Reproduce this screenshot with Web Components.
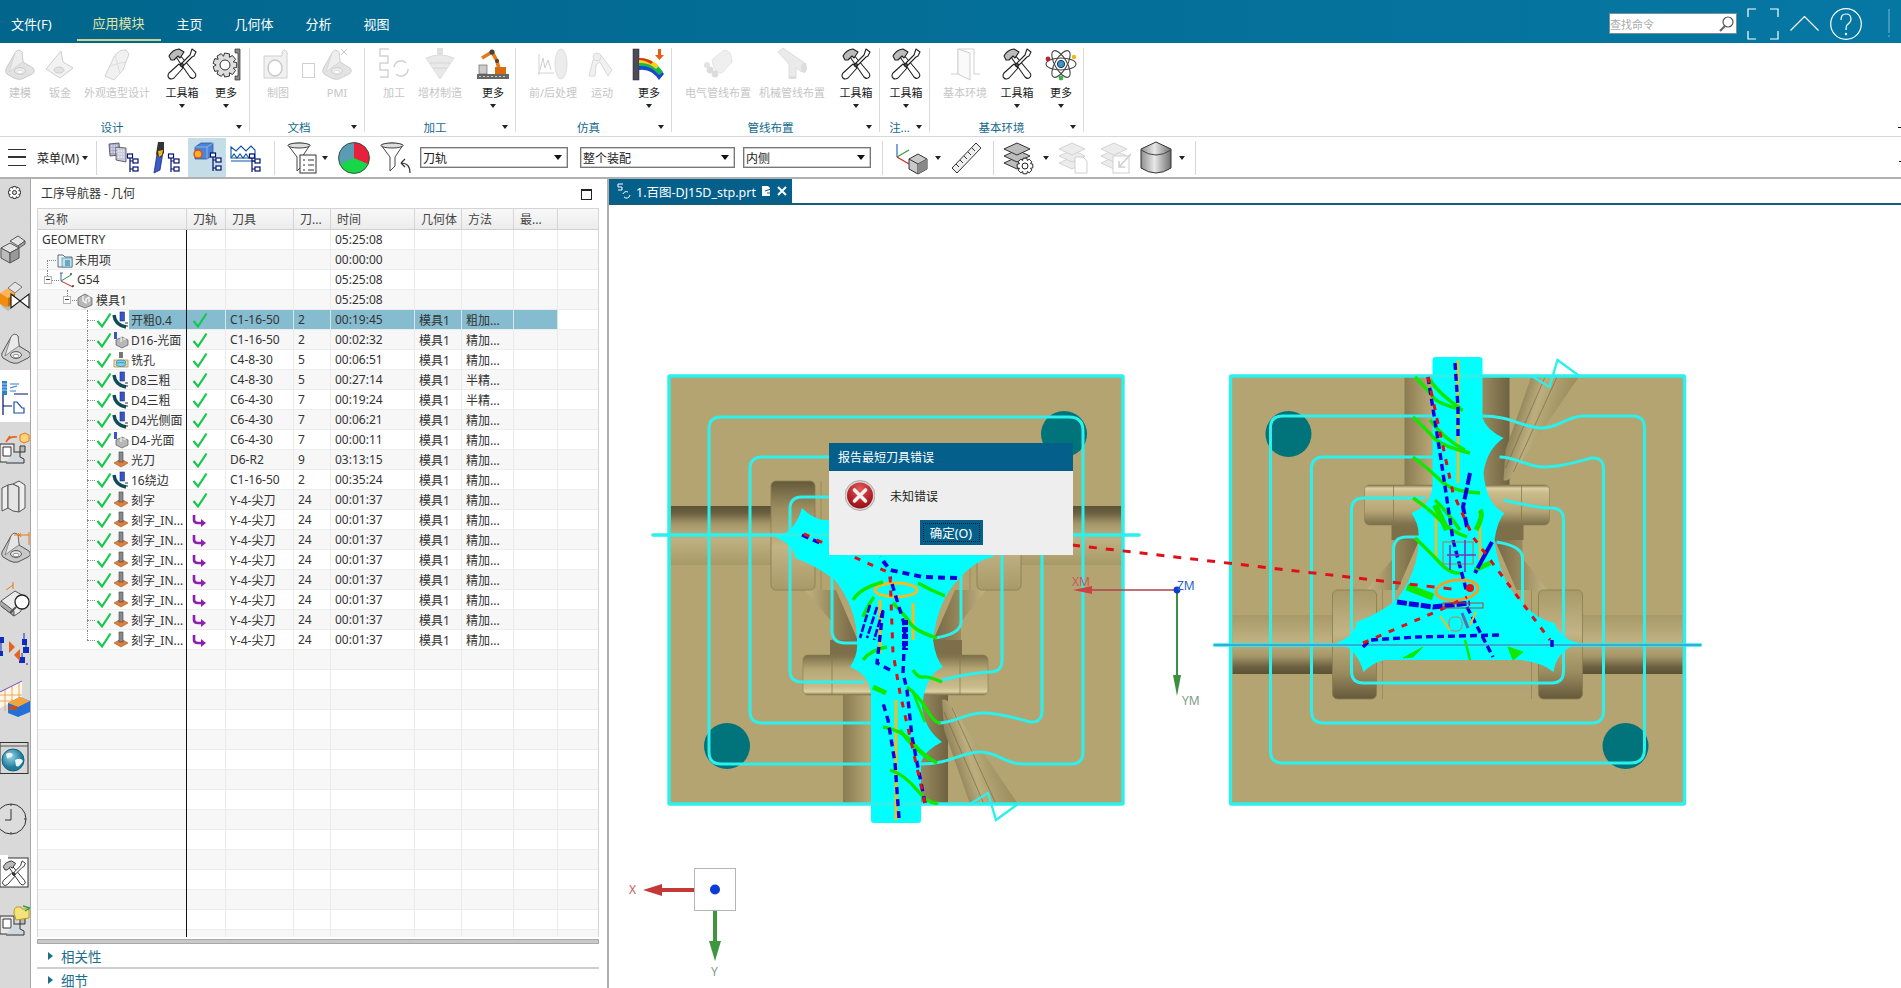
<!DOCTYPE html>
<html lang="zh">
<head>
<meta charset="utf-8">
<title>NX</title>
<style>
  html, body { margin: 0; padding: 0; width: 1901px; height: 988px; overflow: hidden; background: #fff; }
  body { font-family: "Noto Sans", "Noto Sans CJK SC", sans-serif; }
</style>
</head>
<body>
<nx-app>
  <nx-titlebar slot="title"></nx-titlebar>
  <nx-ribbon slot="ribbon"></nx-ribbon>
  <nx-toolbar slot="toolbar"></nx-toolbar>
  <nx-rail slot="rail"></nx-rail>
  <nx-navigator slot="nav"></nx-navigator>
  <nx-viewport slot="view">
    <nx-dialog heading="报告最短刀具错误" message="未知错误" action="确定(O)"></nx-dialog>
  </nx-viewport>
</nx-app>

<script>
const FONT = '"Noto Sans", "Noto Sans CJK SC", sans-serif';

function gear(cx, cy, r, n = 8) {
  let d = '';
  const step = Math.PI * 2 / n;
  for (let i = 0; i < n; i += 1) {
    const a = i * step;
    const pts = [[r * 0.74, -0.5], [r, -0.3], [r, 0.3], [r * 0.74, 0.5]];
    pts.forEach(([rad, o], k) => {
      const x = cx + rad * Math.cos(a + o * step);
      const y = cy + rad * Math.sin(a + o * step);
      d += `${i === 0 && k === 0 ? 'M' : 'L'}${x.toFixed(1)} ${y.toFixed(1)} `;
    });
  }
  return d + 'Z';
}

const tree = `<g fill="#fff" stroke="#00106e" stroke-width="1.2"><path d="M22 13v17M22 19h3M22 27h3" fill="none"/><rect x="19.5" y="12" width="5" height="4"/><rect x="25" y="17" width="5" height="4"/><rect x="25" y="25" width="5" height="4"/></g>`;
const bracket = (a, b, c) => `<path d="M2 21 L11 5 Q14 0 18 4 L19 14 L29 20 Q32 24 28 26 L18 31 Q14 32 10 30 L3 26 Q1 24 2 21Z" fill="${a}" stroke="${b}"/><path d="M11 5 Q14 0 18 4 L19 14 L13 18 L5 24 Z" fill="${c}" stroke="${b}" stroke-width=".6"/><ellipse cx="16" cy="23" rx="5.5" ry="3.4" fill="${c}" stroke="${b}"/><ellipse cx="16" cy="24" rx="3" ry="1.7" fill="#fff" stroke="${b}" stroke-width=".6"/>`;
const tools = `<g fill="#fff" stroke="#222" stroke-width="1.1" stroke-linejoin="round"><path d="M10 9 L13 6 L29 25 Q31 28 28 30 Q26 31 24 29 Z"/><path d="M3 8 Q6 2 13 1 L18 4 L14 10 L12 8 L8 12 L5 12 Z" fill="#bbb"/><path d="M26 1 L30 4 L28 8 L26 9 L15 20 L13 18 L24 7 Z"/><path d="M13 16 L17 20 L8 30 Q5 32 3 30 Q1 28 3 25 Z"/><circle cx="16" cy="17" r="1.5" fill="#555"/></g>`;
const layers = (s, f) => [21, 14, 7].map(y => `<path d="M14 ${y - 6} L27 ${y} L14 ${y + 6} L1 ${y} Z" fill="${f}" stroke="${s}" stroke-width="1"/>`).join('');
const funnel = `<path d="M1 3 Q12 -1 23 3 L15 15 L15 24 L10 29 L10 15 Z" fill="#fff" stroke="#444"/><ellipse cx="12" cy="3.5" rx="11" ry="2.5" fill="#ddd" stroke="#444"/>`;
const machine = `<g stroke="#333" fill="#e8e8e8" stroke-width="1"><rect x="0" y="12" width="14" height="18"/><path d="M3 15h8v9H3z" fill="#fff"/><path d="M14 20 h6 v5 l4 2 v4 h-18" fill="#cfd8dc"/><path d="M20 14 h5 v6 h-5z" fill="#bbb"/></g>`;
const mill = `<path d="M1 3 Q2 13 13 15" fill="none" stroke="#0d4d57" stroke-width="3.4"/><rect x="7" y="0" width="4.4" height="9" fill="#3a55c8" stroke="#1a2e80" stroke-width=".6"/><path d="M12 11h3M12 14h3" stroke="#333"/>`;
const engrave = `<path d="M1 11 L8 7 L15 11 L8 15 Z" fill="#e07f3a" stroke="#a3521a" stroke-width=".6"/><rect x="6" y="0" width="4" height="10" fill="#8a8a8a" stroke="#444" stroke-width=".6"/>`;
const face = `<path d="M3 8 L9 5 L15 8 L15 13 L9 16 L3 13 Z" fill="#b8b8b8" stroke="#555" stroke-width=".7"/><path d="M8 5 v5 M10 7 h3" stroke="#fff"/><rect x="1" y="0" width="3" height="7" fill="#3a55c8"/>`;
const drill = `<rect x="1" y="8" width="14" height="7" fill="#f3e3c0" stroke="#a67c3c" stroke-width=".7"/><ellipse cx="8" cy="10" rx="5" ry="2" fill="#7fd3e6" stroke="#2d7d94" stroke-width=".7"/><ellipse cx="8" cy="12.5" rx="5" ry="2" fill="#7fd3e6" stroke="#2d7d94" stroke-width=".7"/><rect x="6" y="0" width="4" height="6" fill="#777"/>`;

const ICONS = {
  model: bracket('#e2e2e2', '#c9c9c9', '#ededed'),
  sheet: `<path d="M2 21 L17 3 L19 14 L29 20 L16 30 Z" fill="#f2f2f2" stroke="#cfcfcf"/><ellipse cx="15" cy="22" rx="5" ry="3" fill="#e2e2e2" stroke="#cfcfcf"/>`,
  surface: `<path d="M4 28 L13 9 Q18 1 25 2 L28 6 L22 22 L13 32 Z" fill="#f1f1f1" stroke="#d2d2d2"/><path d="M9 18 Q18 15 25 14 M14 6 L19 26" stroke="#ddd" fill="none"/>`,
  tools,
  gearbar: `<path d="${gear(15, 17, 12, 9)}" fill="#ddd" stroke="#333"/><circle cx="15" cy="17" r="5" fill="#fff" stroke="#333"/><path d="M25 1 H30 V32 H25 V28 H28 V5 H25Z" fill="#888" stroke="#333" stroke-width=".7"/>`,
  drawing: `<path d="M2 8 H20 V4 Q22 0 25 4 V30 H2 Z" fill="#f1f1f1" stroke="#d0d0d0"/><ellipse cx="13" cy="20" rx="7" ry="8" fill="#fff" stroke="#c6c6c6" stroke-width="1.4"/>`,
  pmi: bracket('#e3e3e3', '#cfcfcf', '#eeeeee') + `<path d="M20 1 l6 6 M26 1 l-6 6" stroke="#c8c8c8"/>`,
  cam: `<path d="M11 1 H2 V8 H10 V15 H2 V22 H10 V29 H2" fill="none" stroke="#d2d2d2" stroke-width="1.4"/><path d="M16 19 A7 7 0 0 1 28 15 M30 21 A7 7 0 0 1 18 26" fill="none" stroke="#d2d2d2" stroke-width="1.6"/>`,
  additive: `<path d="M2 10 L16 31 L30 10 Q16 4 2 10 Z" fill="#e9e9e9" stroke="#ddd"/><rect x="13" y="0" width="6" height="7" fill="#e0e0e0"/><path d="M6 15 H26 M9 20 H23" stroke="#d4d4d4"/>`,
  robot: `<rect x="0" y="26" width="32" height="5" fill="#666"/><path d="M2 28.5h28" stroke="#ccc" stroke-dasharray="2 2"/><rect x="2" y="17" width="8" height="9" fill="#ccc" stroke="#555" stroke-width=".6"/><path d="M23 25 L20 13 L15 4 L5 10" fill="none" stroke="#e67a14" stroke-width="3.6"/><rect x="18" y="19" width="11" height="7" fill="#d86a10"/><circle cx="15" cy="4" r="2.6" fill="#444"/><circle cx="20" cy="13" r="2" fill="#444"/>`,
  post: `<path d="M1 25 H17 M2 6 V27" stroke="#d2d2d2" fill="none"/><path d="M3 22 L6 10 L8 20 L11 12 L14 22" stroke="#cfcfcf" fill="none"/><ellipse cx="24" cy="16" rx="6" ry="15" fill="#ececec" stroke="#ddd"/>`,
  motion: `<path d="M3 28 L7 12 L14 6 L26 22 L22 28 L14 14 L10 17 L9 28Z" fill="#f1f1f1" stroke="#d8d8d8"/><circle cx="11" cy="9" r="4" fill="#eee" stroke="#ddd"/>`,
  sim: `<rect x="0" y="1" width="6" height="31" fill="#4e4a5c" stroke="#222" stroke-width=".5"/><path d="M6 10 Q20 10 31 26 L26 32 Q18 20 6 22 Z" fill="#1c46d0"/><path d="M6 10 Q20 10 30 24 L26 27 Q18 17 6 18 Z" fill="#17b94a"/><path d="M6 10 Q18 10 26 18 L23 21 Q16 14 6 15 Z" fill="#f3d518"/><path d="M6 10 Q14 10 20 14 L18 16 Q12 12 6 12 Z" fill="#e5301e"/><path d="M25 1v6h-3l4.5 5 4.5-5h-3V1z" fill="#ee5a10"/>`,
  elec: `<path d="M10 12 L22 2 Q30 2 30 14 L20 25 Q12 26 10 12Z" fill="#efefef" stroke="#e4e4e4"/><circle cx="8" cy="22" r="3.4" fill="#dcdcdc"/><circle cx="13" cy="26" r="3.4" fill="#dcdcdc"/><circle cx="5" cy="17" r="3" fill="#e2e2e2"/>`,
  mech: `<path d="M2 4 L7 0 L30 16 L26 24 L20 20 L20 30 H13 L13 16 Z" fill="#eaeaea" stroke="#ddd"/><ellipse cx="28" cy="20" rx="3" ry="5" fill="#ddd"/><rect x="13" y="28" width="7" height="3" fill="#ddd"/>`,
  door: `<path d="M2 26 H9 M25 26 H31" stroke="#d0d0d0"/><path d="M9 1 H25 V26 M9 1 V26" fill="none" stroke="#d0d0d0"/><path d="M9 1 L21 5 V32 L9 26 Z" fill="#fafafa" stroke="#cfcfcf"/>`,
  atom: `<g fill="none" stroke="#444" stroke-width="1.1"><ellipse cx="16" cy="16" rx="15" ry="6"/><ellipse cx="16" cy="16" rx="15" ry="6" transform="rotate(60 16 16)"/><ellipse cx="16" cy="16" rx="15" ry="6" transform="rotate(120 16 16)"/></g><circle cx="16" cy="16" r="3.6" fill="#3a97c8" stroke="#135"/><circle cx="3" cy="11" r="2.4" fill="#c22030"/><circle cx="29" cy="9" r="2.2" fill="#eeb818"/><circle cx="16" cy="30" r="2.4" fill="#35b44a"/>`,
  nav1: `<g stroke="#445" stroke-width=".8"><path d="M1 2 L11 1 L12 13 L2 14 Z" fill="#a9adc8"/><path d="M8 5 L18 6 L18 20 L8 18 Z" fill="#c8cad8"/></g><path d="M3 4h7M3 7h7M3 10h7M10 9h6M10 12h6M10 15h6" stroke="#fff" stroke-dasharray="1.5 1"/>` + tree,
  nav2: `<path d="M8 12 L5 31 L11 28 L14 10 Z" fill="#3b5cc4" stroke="#1a2a7a" stroke-width=".8"/><path d="M9 0 H15 V11 L11 16 L7 12 Z" fill="#333"/><path d="M9 9 L14 8 L13 13 L10 15Z" fill="#f3b820"/>` + tree,
  nav3: `<path d="M4 6 L10 2 L22 2 L22 14 L16 18 L4 18 Z" fill="#4d84d8" stroke="#1f4a98" stroke-width=".7"/><path d="M4 6 H16 V18 M16 6 L22 2" fill="none" stroke="#a8c8f0" stroke-width=".7"/><circle cx="7" cy="13" r="4" fill="#f5b024" stroke="#d8462a" stroke-width="1.3"/>` + tree,
  nav4: `<path d="M1 5 L6 9 L11 4 L16 9 L21 4 L25 8 V16 H1 Z" fill="#fff" stroke="#0b55a3" stroke-width="1.1"/><path d="M1 16 L4 12 L7 16 L10 12 L13 16 L16 12 L19 16 L22 12 L25 16" fill="none" stroke="#0b55a3" stroke-width="1.1"/><path d="M1 19h24" stroke="#0b55a3"/>` + tree,
  filterlist: funnel + `<rect x="13" y="13" width="16" height="18" fill="#fff" stroke="#333"/><path d="M16 18h2M21 18h6M16 23h2M21 23h6M16 28h2M21 28h6" stroke="#333"/>`,
  pie: `<circle cx="16" cy="16" r="15.5" fill="#17d648"/><path d="M16 16 L16 .5 A15.5 15.5 0 0 1 30 22 Z" fill="#e9203c"/><path d="M16 16 L16 .5 A15.5 15.5 0 0 0 2 22 Z" fill="#5a9cb4"/><circle cx="16" cy="16" r="15.5" fill="none" stroke="#333" stroke-width=".8"/>`,
  filterundo: funnel + `<path d="M30 31 Q30 21 21 21 M21 21 l4 -4 M21 21 l4 4" fill="none" stroke="#333" stroke-width="1.2"/>`,
  csyscube: `<path d="M14 17 L23 12 L32 17 L32 27 L23 32 L14 27 Z" fill="#c9c9c9" stroke="#333"/><path d="M14 17 L23 22 L32 17 M23 22 V32" fill="none" stroke="#333"/><path d="M23 22 L32 17 V27 L23 32Z" fill="#888"/><path d="M2 15 V2" stroke="#2a6db0" stroke-width="1.2"/><path d="M2 15 L14 8" stroke="#2aa040" stroke-width="1.2"/><path d="M2 15 L14 22" stroke="#d02020" stroke-width="1.2"/>`,
  ruler: `<path d="M2 26 L26 1 L31 6 L7 31 Z" fill="#eee" stroke="#333"/><path d="M6 22l3 3M10 18l3 3M14 14l3 3M18 10l3 3M22 6l3 3" stroke="#333"/>`,
  layergear: layers('#333', '#bdbdbd') + `<path d="${gear(22, 24, 8, 8)}" fill="#fff" stroke="#222"/><circle cx="22" cy="24" r="3" fill="#fff" stroke="#222"/>`,
  layercopy: layers('#d4d4d4', '#ececec') + `<path d="M17 15 H25 L29 19 V31 H17 Z" fill="#fff" stroke="#cfcfcf"/>`,
  layermove: layers('#d4d4d4', '#ececec') + `<rect x="13" y="14" width="16" height="17" fill="#fff" stroke="#cfcfcf"/><path d="M31 12 L19 25 M19 19 V25 H25" fill="none" stroke="#cfcfcf" stroke-width="1.6"/>`,
  cylinder: `<defs><linearGradient id="g"><stop offset="0" stop-color="#8f8f8f"/><stop offset=".45" stop-color="#e8e8e8"/><stop offset="1" stop-color="#6f6f6f"/></linearGradient></defs><path d="M1 7 L16 0 L31 7 V26 Q16 36 1 26 Z" fill="url(#g)" stroke="#333"/><path d="M1 8 Q16 18 31 8" fill="none" stroke="#444"/>`,
  railcube: `<g stroke="#555" fill="#e4e4e4"><path d="M1 19 L10 14 L19 19 L10 24Z"/><path d="M1 19 V29 L10 34 V24 Z" fill="#bbb"/><path d="M19 19 V29 L10 34 V24Z" fill="#999"/><path d="M10 12 L18 7 L25 12 L18 17Z"/><path d="M19 19 L25 15 V12 L18 17 Z" fill="#aaa"/></g>`,
  railvalve: `<path d="M0 13 L8 8 L15 13 L8 18 Z" fill="#ffb45a"/><path d="M0 13 V24 L8 29 V18 Z" fill="#f08c10"/><path d="M15 13 V24 L8 29 V18 Z" fill="#c96f08"/><path d="M8 8 L15 2 L22 7 L15 13 Z" fill="#e4e4e4" stroke="#777"/><path d="M1 26 L8 31 L15 26 V22 L8 27 Z" fill="#bbb"/><path d="M11 14 L29 28 V14 L11 28 Z" fill="#fff" stroke="#111" stroke-width="1.1"/>`,
  railbracket: bracket('#cfcfcf', '#555', '#eaeaea'),
  railop: `<rect x="2" y="0" width="5" height="14" fill="#2f7fd0"/><path d="M2 3h5M2 6h5M2 9h5" stroke="#a8d0f0"/><path d="M10 3 H19 M10 7 L17 5 M10 10 H16" stroke="#2f7fd0" stroke-width="1.2"/><path d="M3 14 V34 M3 25 H12 M14 13 H28" stroke="#00106e" stroke-width="1.2" fill="none"/><path d="M14 21 H17 L22 27 H24 V32 H14 Z" fill="#fff" stroke="#1f4fa8" stroke-width="1.2"/>`,
  railmachine: machine + `<path d="M6 10 Q9 4 17 5 M10 4l-4 6" stroke="#e6641a" stroke-width="1.6" fill="none"/><path d="M20 3 L25 1 L29 3 V9 L24 11 L20 9Z" fill="#ffd37a" stroke="#e67a14"/>`,
  railbooks: `<g fill="#eee" stroke="#555"><path d="M2 8 L8 5 V28 L2 31 Z"/><path d="M8 5 L13 4 L19 7 V32 L13 31 L8 28 Z" fill="#e4e4e4"/><path d="M13 4 L19 1 L25 5 V28 L19 32 V7 Z"/></g>`,
  raildim: bracket('#c8c8c8', '#555', '#e6e6e6') + `<path d="M14 4 H29 M29 1 V14 M18 2 l3 4 M21 2 l-3 4" stroke="#e67a14" fill="none"/>`,
  railsection: `<path d="M1 19 L15 9 L29 17 L20 30 L14 34 L1 24 Z" fill="#ececec" stroke="#555"/><path d="M1 24 L14 34 V29 L1 19" fill="#aaa" stroke="#555"/><circle cx="22" cy="20" r="7" fill="#fff" stroke="#222" stroke-width="1.3"/><path d="M16 25 L10 31" stroke="#555" stroke-width="2"/><path d="M13 0 V7 M6 8 L13 3" stroke="#e67a14"/>`,
  railflow: `<g fill="#0c2dbd"><rect x="-2" y="6" width="6" height="6"/><rect x="22" y="8" width="5" height="6"/><rect x="-2" y="20" width="5" height="5"/><rect x="23" y="16" width="6" height="6"/><rect x="19" y="26" width="6" height="6"/></g><path d="M1 12v8M24 2v6M26 14v2M22 22v4M27 32v2" stroke="#0c2dbd" fill="none"/><path d="M9 10 L15 16 L9 22 Z" fill="#e6641a"/><path d="M20 18 L14 24 L20 30Z" fill="#e6641a"/>`,
  railgrid: `<path d="M-2 12 L22 0 V16 L-2 28 Z" fill="#fff7e6"/><path d="M-2 14 H22 M-2 20 H22 M5 8 V30 M12 5 V30 M19 2 V20" stroke="#e8a860"/><path d="M-2 12 L22 0" stroke="#7050c0"/><path d="M8 22 L20 16 L30 20 L30 31 L18 36 L8 32 Z" fill="#2470d8"/><path d="M8 22 L20 16 L30 20 L18 26 Z" fill="#f5a43a"/><rect x="9" y="25" width="8" height="4" fill="#c05020"/>`,
  railglobe: `<defs><radialGradient id="g" cx=".4" cy=".35"><stop offset="0" stop-color="#98d6e8"/><stop offset="1" stop-color="#1f7a9c"/></radialGradient></defs><rect x="0" y=".5" width="28" height="31" fill="#d8d8d8" stroke="#333"/><path d="M0 4 H28" stroke="#555"/><circle cx="13" cy="18" r="11" fill="url(#g)" stroke="#17607c"/><path d="M6 12 Q11 9 13 13 Q10 17 7 16Z M15 18 Q21 15 23 19 Q19 26 16 24Z" fill="#eaf6fa"/>`,
  railclock: `<circle cx="11" cy="16" r="15" fill="#dcdcdc" stroke="#333"/><path d="M11 6 V17 H5 M11 1v2M11 29v2M-4 16h2M24 16h2" stroke="#333" fill="none"/>`,
  railtools: `<rect x="0" y="2" width="28" height="29" fill="#fff" stroke="#333"/><rect x="-2" y="-1" width="10" height="4" fill="#fff"/><g transform="scale(.82) translate(1 5)">${tools}</g>`,
  railmachine2: machine + `<path d="M14 9 Q14 3 17 3 H21 L22 5 H29 V14 L16 16 Z" fill="#f4e27a" stroke="#b89c20"/><path d="M23 2 L30 4 L25 7" fill="none" stroke="#2aa040" stroke-width="1.4"/>`,
  ok: `<path d="M1.5 9 L6 14.5 L14.5 1.5" fill="none" stroke="#14c84a" stroke-width="2.2"/>`,
  post2: `<path d="M2 3 L2 8 Q2 11 6 11 L10 11" fill="none" stroke="#8a1fb0" stroke-width="2.6"/><path d="M9 7 L14 11 L9 15 Z" fill="#8a1fb0"/>`,
  mill, engrave, face, drill,
  folder: `<path d="M1 3 H6 L8 5 H15 V15 H1 Z" fill="#eaf3f7" stroke="#446" stroke-width=".8"/><rect x="5" y="6" width="10" height="9" fill="#bfe0ec" stroke="#2d7d94" stroke-width=".6"/><path d="M8 9h5M8 11h5M8 13h5" stroke="#1d6d8c"/>`,
  csys: `<path d="M2 9 L14 15" stroke="#d02020"/><path d="M2 9 L12 3" stroke="#2aa040"/><path d="M2 9 V1" stroke="#2a6db0"/><path d="M1 1h3M11 1l2 2m0-2l-2 2M13 13l2 2m0-2l-2 2" stroke="#333" stroke-width=".7"/>`,
  workpiece: `<path d="M1 6 L8 2 L15 6 V13 L8 16 L1 13 Z" fill="#b8b8b8" stroke="#555" stroke-width=".7"/><path d="M6 4 v5 l3 2 v-4 l3-2 v5" fill="none" stroke="#fff" stroke-width="1.2"/>`
};

class NxIcon extends HTMLElement {
  connectedCallback() {
    const size = +this.getAttribute('size') || 32;
    const box = +this.getAttribute('box') || 32;
    this.attachShadow({ mode: 'open' });
    this.shadowRoot.innerHTML = `
      <style>:host { display: block; width: ${size}px; height: ${size}px; flex: none; } svg { display: block; overflow: visible; }</style>
      <svg width="${size}" height="${size}" viewBox="0 0 ${box} ${box}">${ICONS[this.getAttribute('name')] || ''}</svg>`;
  }
}

class NxApp extends HTMLElement {
  constructor() {
    super();
    this.attachShadow({ mode: 'open' });
  }

  connectedCallback() {
    this.shadowRoot.innerHTML = `
    <style>
      :host { display: flex; flex-direction: column; width: 1901px; height: 988px; font-family: ${FONT}; overflow: hidden; }
      .main { display: flex; flex: 1; min-height: 0; }
    </style>
    <slot name="title"></slot>
    <slot name="ribbon"></slot>
    <slot name="toolbar"></slot>
    <div class="main">
      <slot name="rail"></slot>
      <slot name="nav"></slot>
      <slot name="view"></slot>
    </div>`;
  }
}

class NxTitlebar extends HTMLElement {
  connectedCallback() {
    this.attachShadow({ mode: 'open' });
    this.shadowRoot.innerHTML = `
    <style>
      :host { display: flex; align-items: center; height: 43px; color: #fff; font-size: 13px;
        background: linear-gradient(90deg, #02668c, #0677a3); flex: none; }
      .tabs { display: flex; height: 43px; align-items: stretch; }
      .tab { display: flex; align-items: center; padding-top: 3px; box-sizing: border-box; }
      .active { color: #e3e3a4; border-bottom: 2px solid #c9d58f; width: 84px; justify-content: center; margin: 0 16px 0 25px; height: 41px; padding-top: 5px; }
      .search { margin-left: auto; margin-top: 4px; width: 128px; height: 21px; box-sizing: border-box; background: #fff; border: 1px solid #76909c;
        display: flex; align-items: center; justify-content: space-between; font-size: 11px; color: #aaa; }
      .btns { display: flex; align-items: center; margin-left: 10px; margin-right: 11px; gap: 11px; padding-top: 4px; }
      svg { display: block; }
    </style>
    <div class="tabs">
      <div class="tab" style="margin-left:11px">文件(F)</div>
      <div class="tab active">应用模块</div>
      <div class="tab" style="margin-right:32px">主页</div>
      <div class="tab" style="margin-right:32px">几何体</div>
      <div class="tab" style="margin-right:32px">分析</div>
      <div class="tab">视图</div>
    </div>
    <div class="search">查找命令
      <svg width="18" height="18" viewBox="0 0 18 18" style="margin-right:1px"><circle cx="11" cy="7" r="5" fill="#fff" stroke="#555" stroke-width="1.2"/><path d="M8 11 L3 16" stroke="#666" stroke-width="2.2"/></svg>
    </div>
    <div class="btns">
      <svg width="32" height="32" viewBox="0 0 32 32" fill="none" stroke="#fff" stroke-width="1.2"><path d="M9 1H1V9M23 1H31V9M1 23V31H9M31 23V31H23"/></svg>
      <svg width="29" height="15" viewBox="0 0 29 15" fill="none" stroke="#fff" stroke-width="1.2"><path d="M.5 14.5 L14.5 .5 L28.5 14.5"/></svg>
      <svg width="32" height="32" viewBox="0 0 32 32" fill="none" stroke="#fff" stroke-width="1.2"><circle cx="16" cy="16" r="15.3"/><path d="M11 12 Q11 6 16 6 Q21 6 21 11 Q21 14 17 17 Q16 18 16 22"/><circle cx="16" cy="26" r=".6"/></svg>
      <svg width="2" height="30" style="margin-left:15px"><path d="M1 0V30" stroke="#3e97bd" stroke-width="2" stroke-dasharray="24 2 2 2"/></svg>
    </div>`;
  }
}

class NxRibbonItem extends HTMLElement {
  connectedCallback() {
    const off = this.hasAttribute('off');
    const label = this.getAttribute('label') || '';
    this.attachShadow({ mode: 'open' });
    this.shadowRoot.innerHTML = `
    <style>
      :host { display: flex; flex-direction: column; align-items: center; width: ${this.getAttribute('w')}px; flex: none; padding-top: 5px; box-sizing: border-box; }
      .label { height: 14px; line-height: 14px; margin-top: 6px; font-size: 11px; white-space: nowrap; color: ${off ? '#c6c6c6' : '#1a1a1a'}; }
      .arrow { margin-top: 4px; width: 0; height: 0; border: 3px solid transparent; border-top: 4px solid #222; border-bottom: 0; }
    </style>
    <nx-icon name="${this.getAttribute('icon')}"></nx-icon>
    <div class="label">${label}</div>
    ${this.hasAttribute('arrow') ? '<div class="arrow"></div>' : ''}`;
  }
}

class NxRibbonGroup extends HTMLElement {
  connectedCallback() {
    this.attachShadow({ mode: 'open' });
    this.shadowRoot.innerHTML = `
    <style>
      :host { display: flex; flex-direction: column; width: ${this.getAttribute('w')}px; flex: none; position: relative; box-sizing: border-box; height: 93px; }
      .items { display: flex; height: 74px; padding-left: ${this.getAttribute('pad') || 0}px; }
      .foot { display: flex; align-items: center; height: 19px; font-size: 11.5px; color: #12698c; }
      .name { flex: 1; text-align: center; white-space: nowrap; padding-left: 3px; padding-right: ${this.getAttribute('shift') || 0}px; }
      .arrow { margin: 0 8px 0 0; width: 0; height: 0; border: 3px solid transparent; border-top: 4px solid #222; border-bottom: 0; }
      .rule { position: absolute; right: 0; top: 5px; bottom: 4px; width: 1px; background: #dadada; }
    </style>
    <div class="items"><slot></slot></div>
    <div class="foot"><span class="name">${this.getAttribute('name')}</span><span class="arrow"></span></div>
    <div class="rule"></div>`;
  }
}

class NxRibbon extends HTMLElement {
  connectedCallback() {
    this.attachShadow({ mode: 'open' });
    const item = (label, icon, w, opts = '') => `<nx-ribbon-item label="${label}" icon="${icon}" w="${w}" ${opts}></nx-ribbon-item>`;
    this.shadowRoot.innerHTML = `
    <style>
      :host { display: flex; height: 94px; box-sizing: border-box; border-bottom: 1px solid #d8d8d8; flex: none; }
      .chk { width: 10px; flex: none; display: flex; justify-content: center; padding-top: 20px; box-sizing: border-box; }
      .chk i { display: block; width: 13px; height: 15px; flex: none; border: 1px solid #d0d0d0; box-sizing: border-box; }
      .tail { margin-left: auto; width: 3px; height: 1px; background: #111; align-self: flex-end; margin-bottom: 8px; }
    </style>
    <nx-ribbon-group name="设计" w="250" shift="15">
      ${item('建模', 'model', 40, 'off')}${item('钣金', 'sheet', 40, 'off')}${item('外观造型设计', 'surface', 74, 'off')}
      ${item('工具箱', 'tools', 56, 'arrow')}${item('更多', 'gearbar', 32, 'arrow')}
    </nx-ribbon-group>
    <nx-ribbon-group name="文档" w="115" pad="3" shift="6">
      ${item('制图', 'drawing', 50, 'off')}<span class="chk"><i></i></span>${item('PMI', 'pmi', 48, 'off')}
    </nx-ribbon-group>
    <nx-ribbon-group name="加工" w="151" pad="9">
      ${item('加工', 'cam', 40, 'off')}${item('增材制造', 'additive', 52, 'off')}${item('更多', 'robot', 54, 'arrow')}
    </nx-ribbon-group>
    <nx-ribbon-group name="仿真" w="156" pad="8">
      ${item('前/后处理', 'post', 58, 'off')}${item('运动', 'motion', 40, 'off')}${item('更多', 'sim', 54, 'arrow')}
    </nx-ribbon-group>
    <nx-ribbon-group name="管线布置" w="208" pad="6">
      ${item('电气管线布置', 'elec', 80, 'off')}${item('机械管线布置', 'mech', 68, 'off')}${item('工具箱', 'tools', 60, 'arrow')}
    </nx-ribbon-group>
    <nx-ribbon-group name="注..." w="50">
      ${item('工具箱', 'tools', 52, 'arrow')}
    </nx-ribbon-group>
    <nx-ribbon-group name="基本环境" w="154">
      ${item('基本环境', 'door', 70, 'off')}${item('工具箱', 'tools', 34, 'arrow')}${item('更多', 'atom', 54, 'arrow')}
    </nx-ribbon-group>
    <span class="tail"></span>`;
  }
}

class NxSelect extends HTMLElement {
  connectedCallback() {
    this.attachShadow({ mode: 'open' });
    this.shadowRoot.innerHTML = `
    <style>
      :host { display: flex; align-items: center; justify-content: space-between; height: 21px; box-sizing: border-box; border: 1px solid #777;
        box-shadow: inset 0 0 0 .5px #999; font-size: 12px; color: #222; padding: 0 5px 0 2px; flex: none; background: #fff; }
      i { width: 0; height: 0; border: 4px solid transparent; border-top: 5px solid #111; border-bottom: 0; }
    </style>
    <span>${this.getAttribute('value')}</span><i></i>`;
  }
}

class NxToolbar extends HTMLElement {
  connectedCallback() {
    this.attachShadow({ mode: 'open' });
    const icon = (name, ml) => `<nx-icon name="${name}" size="32" style="margin-left:${ml}px"></nx-icon>`;
    const arrow = ml => `<i class="arrow" style="margin-left:${ml}px"></i>`;
    const sep = ml => `<b class="sep" style="margin-left:${ml}px"></b>`;
    const sel = (value, ml, w) => `<nx-select value="${value}" style="margin-left:${ml}px;width:${w}px"></nx-select>`;
    this.shadowRoot.innerHTML = `
    <style>
      :host { display: flex; align-items: center; height: 42px; box-sizing: border-box; border-bottom: 2px solid #b0b0b0; padding-top: 1px; flex: none; background: #fff; position: relative; }
      .ham { width: 18px; height: 17px; margin-left: 8px; border-top: 1.5px solid #333; border-bottom: 1.5px solid #333; box-sizing: border-box; position: relative; flex: none; }
      .ham::after { content: ""; position: absolute; left: 0; right: 0; top: 6px; height: 1.5px; background: #333; }
      .menu { font-size: 12px; margin-left: 11px; width: 42px; color: #222; white-space: nowrap; flex: none; }
      .arrow { width: 0; height: 0; border: 3px solid transparent; border-top: 4px solid #222; border-bottom: 0; flex: none; margin-right: 1px; }
      .sep { width: 1px; height: 34px; background: #d6d6d6; flex: none; }
      .sel { width: 38px; height: 39px; margin-left: 7px; margin-top: -1px; background: #c5dde6; display: flex; align-items: center; justify-content: center; flex: none; }
      .tail { position: absolute; right: 0; top: 24px; width: 2px; height: 1px; background: #111; }
    </style>
    <div class="ham"></div><div class="menu">菜单(M)</div>${arrow(3)}${sep(7)}
    ${icon('nav1', 11)}${icon('nav2', 9)}
    <div class="sel"><nx-icon name="nav3"></nx-icon></div>
    ${icon('nav4', 4)}${sep(12)}
    ${icon('filterlist', 12)}${arrow(3)}${icon('pie', 9)}${icon('filterundo', 10)}
    ${sel('刀轨', 8, 148)}${sel('整个装配', 12, 155)}${sel('内侧', 8, 128)}${sep(11)}
    ${icon('csyscube', 12)}${arrow(8)}${icon('ruler', 8)}${sep(11)}
    ${icon('layergear', 9)}${arrow(8)}${icon('layercopy', 8)}${icon('layermove', 10)}${icon('cylinder', 8)}${arrow(7)}${sep(9)}
    <span class="tail"></span>`;
  }
}

class NxRail extends HTMLElement {
  connectedCallback() {
    this.attachShadow({ mode: 'open' });
    const list = [
      ['railcube', 245], ['railvalve', 296], ['railbracket', 348], ['railop', 397], ['railmachine', 448],
      ['railbooks', 496], ['raildim', 547], ['railsection', 598], ['railflow', 647], ['railgrid', 697], ['railglobe', 758],
      ['railclock', 819], ['railtools', 872], ['railmachine2', 920]
    ];
    let y = 205;
    const cells = list.map(([name, c]) => {
      const h = 36;
      const cellTop = c - h / 2;
      const gap = cellTop - y;
      y = cellTop + h;
      return `<div class="cell" style="margin-top:${gap}px"><nx-icon name="${name}" size="32"></nx-icon></div>`;
    }).join('');
    this.shadowRoot.innerHTML = `
    <style>
      :host { display: block; width: 31px; flex: none; box-sizing: border-box; background: linear-gradient(#d9d9d9 191px, #fff 191px, #fff 243px, #d9d9d9 243px); border-right: 1px solid #a8a8a8; position: relative; overflow: hidden; }
      .gear { height: 26px; display: flex; align-items: center; justify-content: center; padding-right: 2px; }
      .cell { height: 36px; display: flex; align-items: center; padding-left: 0; }
      svg { display: block; }
    </style>
    <div class="gear"><svg width="13" height="13" viewBox="0 0 14 14"><path d="${gear(7, 7, 6.8, 8)}" fill="#fff" stroke="#222"/><circle cx="7" cy="7" r="2.2" fill="#d9d9d9" stroke="#222"/></svg></div>
    ${cells}`;
  }
}

class NxNavigator extends HTMLElement {
  static get rows() {
    const m1 = '模具1';
    const e = 'Y-4-尖刀';
    return [
      ['GEOMETRY', 'root', '', '', '', '05:25:08', '', ''],
      ['未用项', 'folder', '', '', '', '00:00:00', '', ''],
      ['G54', 'csys', '', '', '', '05:25:08', '', ''],
      [m1, 'workpiece', '', '', '', '05:25:08', '', ''],
      ['开粗0.4', 'mill', 'ok', 'C1-16-50', '2', '00:19:45', m1, '粗加...'],
      ['D16-光面', 'face', 'ok', 'C1-16-50', '2', '00:02:32', m1, '精加...'],
      ['铣孔', 'drill', 'ok', 'C4-8-30', '5', '00:06:51', m1, '精加...'],
      ['D8三粗', 'mill', 'ok', 'C4-8-30', '5', '00:27:14', m1, '半精...'],
      ['D4三粗', 'mill', 'ok', 'C6-4-30', '7', '00:19:24', m1, '半精...'],
      ['D4光侧面', 'mill', 'ok', 'C6-4-30', '7', '00:06:21', m1, '精加...'],
      ['D4-光面', 'face', 'ok', 'C6-4-30', '7', '00:00:11', m1, '精加...'],
      ['光刀', 'engrave', 'ok', 'D6-R2', '9', '03:13:15', m1, '精加...'],
      ['16绕边', 'mill', 'ok', 'C1-16-50', '2', '00:35:24', m1, '精加...'],
      ['刻字', 'engrave', 'ok', e, '24', '00:01:37', m1, '精加...'],
      ...Array(7).fill(['刻字_IN...', 'engrave', 'post2', e, '24', '00:01:37', m1, '精加...'])
    ];
  }

  static get styles() {
    return /* css */`
    :host { display: block; width: 577px; flex: none; box-sizing: border-box; position: relative; font-size: 12px; color: #333; background: #fff; }
    .title { height: 29px; display: flex; align-items: center; justify-content: space-between; padding: 0 16px 1px 10px; box-sizing: border-box; color: #333; }
    .title i { display: block; width: 11px; height: 11px; border: 1.5px solid #222; border-top-width: 2.5px; box-sizing: border-box; margin-top: 2px; }
    .table { margin-left: 6px; width: 562px; border: 1px solid #d4d4d4; border-bottom: 0; box-sizing: border-box; }
    .row { display: grid; grid-template-columns: 149px 39px 68px 37px 84px 47px 52px 44px 41px; height: 20px; box-sizing: border-box; border-bottom: 1px solid #ececec; }
    .row > div { border-right: 1px solid #ebebeb; display: flex; align-items: center; padding-left: 4px; white-space: nowrap; overflow: hidden; box-sizing: border-box; }
    .row > div.name { border-right: 0; padding: 0; position: relative; }
    .head { height: 21px; background: linear-gradient(#f8f8f8, #ececec); border-bottom: 1px solid #cfcfcf; color: #444; }
    .head > div { border-right: 1px solid #d6d6d6; padding-left: 6px; }
    .head > div.name { border-right: 1px solid #d6d6d6; padding-left: 6px; }
    .rows { height: 707px; overflow: hidden; position: relative; }
    .rows::after { content: ""; position: absolute; left: 148px; top: 0; bottom: 0; width: 1px; background: #111; }
    .odd { background: #f7f7f7; }
    .sel > div:not(.name):not(:last-child) { background: #86bccf; border-right-color: #d5e6ec; }
    .text { flex: 1; height: 100%; display: flex; align-items: center; padding-left: 2px; min-width: 0; }
    .sel .text { background: #86bccf; }
    .box { width: 8px; height: 8px; border: 1px solid #b5b5b5; box-sizing: border-box; background: #fff; position: relative; flex: none; }
    .box::after { content: ""; position: absolute; left: 1px; right: 1px; top: 2.5px; height: 1px; background: #444; }
    .v, .h { position: absolute; }
    .v { border-left: 1px dotted #888; width: 0; }
    .h { border-top: 1px dotted #888; height: 0; }
    nx-icon { position: relative; }
    .split { margin-left: 6px; width: 562px; height: 5px; margin-top: 2px; background: #c8c8c8; border: 1px solid #aaa; box-sizing: border-box; }
    .sect { height: 23px; display: flex; align-items: center; padding-left: 11px; font-size: 13.5px; color: #1d6d8c; margin-left: 6px; width: 562px; box-sizing: border-box; }
    .sect + .sect { border-top: 2px solid #cfcfcf; height: 23px; }
    .sect i { width: 0; height: 0; border: 4px solid transparent; border-left: 5px solid #1d6d8c; border-right: 0; margin-right: 8px; }
    `;
  }

  nameCell(r, i) {
    const [name, icon] = r;
    const ic = (n, left) => `<nx-icon name="${n}" size="16" box="16" style="margin-left:${left}px"></nx-icon>`;
    const last = NxNavigator.rows.length - 1;
    if (i === 0) return `<span style="padding-left:4px">${name}</span>`;
    if (i === 1) return `<span class="v" style="left:9px;top:10px;height:10px"></span><span class="h" style="left:9px;top:10px;width:9px"></span>${ic(icon, 19)}<span class="text">${name}</span>`;
    if (i === 2) return `<span class="v" style="left:9px;top:0;height:6px"></span><span class="h" style="left:14px;top:10px;width:7px"></span><span class="box" style="margin-left:6px"></span>${ic(icon, 7)}<span class="text">${name}</span>`;
    if (i === 3) return `<span class="v" style="left:29px;top:0;height:6px"></span><span class="h" style="left:34px;top:10px;width:5px"></span><span class="box" style="margin-left:25px"></span>${ic(icon, 6)}<span class="text" style="padding-left:3px">${name}</span>`;
    const h = i === last ? 10 : 20;
    return `<span class="v" style="left:49px;top:0;height:${h}px"></span><span class="h" style="left:49px;top:10px;width:8px"></span>
      ${ic('ok', 58)}${ic(icon, 1)}<span class="text">${name}</span>`;
  }

  render() {
    const rows = NxNavigator.rows;
    const head = ['名称', '刀轨', '刀具', '刀...', '时间', '几何体', '方法', '最...', ''];
    let html = '';
    for (let i = 0; i < 36; i += 1) {
      const r = rows[i];
      const cls = `row ${i % 2 ? 'odd' : ''} ${i === 4 ? 'sel' : ''}`;
      if (r) {
        const mark = r[2] ? `<nx-icon name="${r[2]}" size="16" box="16" style="margin-left:1px"></nx-icon>` : '';
        html += `<div class="${cls}"><div class="name">${this.nameCell(r, i)}</div><div>${mark}</div><div>${r[3]}</div><div>${r[4]}</div><div>${r[5]}</div><div>${r[6]}</div><div>${r[7]}</div><div></div><div></div></div>`;
      } else {
        html += `<div class="${cls}"><div class="name"></div>${'<div></div>'.repeat(8)}</div>`;
      }
    }
    this.shadowRoot.innerHTML = `
    <style>${NxNavigator.styles}</style>
    <div class="title"><span>工序导航器 - 几何</span><i></i></div>
    <div class="table">
      <div class="row head">${head.map((h, i) => `<div class="${i ? '' : 'name'}">${h}</div>`).join('')}</div>
      <div class="rows">${html}</div>
    </div>
    <div class="split"></div>
    <div class="sect"><i></i>相关性</div>
    <div class="sect"><i></i>细节</div>`;
  }

  connectedCallback() {
    this.attachShadow({ mode: 'open' });
    this.render();
  }
}

class NxDialog extends HTMLElement {
  connectedCallback() {
    this.attachShadow({ mode: 'open' });
    this.shadowRoot.innerHTML = `
    <style>
      :host { display: block; width: 244px; height: 112px; background: #eeeeee; font-size: 12px; color: #222; }
      .bar { height: 28px; background: #04608a; color: #fff; display: flex; align-items: center; padding-left: 9px; }
      .body { display: flex; align-items: center; height: 49px; padding-left: 16px; }
      .msg { margin-left: 15px; }
      .foot { display: flex; justify-content: center; }
      button { width: 63px; height: 25px; border: 0; background: #04608a; color: #fff; font: 12.5px ${FONT}; padding: 0; position: relative; }
      button::after { content: ""; position: absolute; inset: 3px; border: 1px dotted #0a1a24; }
      svg { display: block; }
    </style>
    <div class="bar">${this.getAttribute('heading')}</div>
    <div class="body">
      <svg width="30" height="31" viewBox="0 0 30 31">
        <defs><radialGradient id="r" cx=".5" cy=".25" r=".9"><stop offset="0" stop-color="#e45a5a"/><stop offset=".6" stop-color="#b01c22"/><stop offset="1" stop-color="#7a0f12"/></radialGradient></defs>
        <circle cx="15" cy="15.5" r="15" fill="#d8d8d8" stroke="#888" stroke-width=".6"/>
        <circle cx="15" cy="15.5" r="13" fill="url(#r)"/>
        <path d="M9.5 10 L20.5 21 M20.5 10 L9.5 21" stroke="#f4f0f0" stroke-width="3.6" stroke-linecap="round"/>
      </svg>
      <span class="msg">${this.getAttribute('message')}</span>
    </div>
    <div class="foot"><button>${this.getAttribute('action')}</button></div>`;
  }
}

class NxViewport extends HTMLElement {
  static get part() {
    return /* html */`
    <defs>
      <linearGradient id="tube" x1="0" y1="0" x2="0" y2="1"><stop offset="0" stop-color="#5c5236"/><stop offset=".12" stop-color="#6b6041"/><stop offset=".3" stop-color="#a59668"/><stop offset=".55" stop-color="#c0b182"/><stop offset="1" stop-color="#a89968"/></linearGradient>
      <linearGradient id="cap" x1="0" y1="0" x2="0" y2="1"><stop offset="0" stop-color="#65593b"/><stop offset=".25" stop-color="#9c8d60"/><stop offset=".6" stop-color="#c3b485"/><stop offset="1" stop-color="#a99a6a"/></linearGradient>
      <linearGradient id="flange" x1="0" y1="0" x2="0" y2="1"><stop offset="0" stop-color="#7a6e4a"/><stop offset=".35" stop-color="#b6a675"/><stop offset=".8" stop-color="#c9bb8b"/><stop offset=".92" stop-color="#ddd0a2"/><stop offset="1" stop-color="#82754e"/></linearGradient>
      <linearGradient id="stemg" x1="0" y1="0" x2="1" y2="0"><stop offset="0" stop-color="#8a7c52"/><stop offset=".25" stop-color="#b6a675"/><stop offset=".7" stop-color="#a09164"/><stop offset="1" stop-color="#6e6241"/></linearGradient>
      <linearGradient id="diag" x1="0" y1=".5" x2="1" y2=".1"><stop offset="0" stop-color="#7c6f49"/><stop offset=".3" stop-color="#bdae7e"/><stop offset=".5" stop-color="#a99a6a"/><stop offset=".85" stop-color="#8f8156"/><stop offset="1" stop-color="#6c6040"/></linearGradient>
      <linearGradient id="arm" x1="0" y1="0" x2="1" y2="0"><stop offset="0" stop-color="#c2b484"/><stop offset=".5" stop-color="#95865a"/><stop offset="1" stop-color="#6e6241"/></linearGradient>
      <linearGradient id="arm2" x1="1" y1="0" x2="0" y2="0"><stop offset="0" stop-color="#c2b484"/><stop offset=".5" stop-color="#95865a"/><stop offset="1" stop-color="#6e6241"/></linearGradient>
    </defs>
    <rect x="669" y="376" width="454" height="428" fill="#b4a472"/>
    <rect x="671" y="506" width="450" height="59" fill="url(#tube)"/>
    <rect x="843" y="690" width="105" height="114" fill="url(#stemg)"/>
    <path d="M942 700 Q946 698 950 704 L1018 804 L970 804 L944 730 Z" fill="url(#diag)"/>
    <path d="M944 712 L984 804 M952 708 L996 804" stroke="#6e6241" stroke-width=".6" fill="none"/>
    <path d="M805 590 L836 590 L862 650 L832 650 L832 622 Z" fill="url(#arm)"/>
    <path d="M986 590 L955 590 L929 650 L961 650 L961 622 Z" fill="url(#arm2)"/>
    <path d="M815 490 H977 V590 H815Z" fill="#b3a371"/>
    <rect x="771" y="481" width="44" height="109" rx="5" fill="url(#cap)" stroke="#8a7c52" stroke-width=".8"/>
    <rect x="977" y="481" width="44" height="109" rx="5" fill="url(#cap)" stroke="#8a7c52" stroke-width=".8"/>
    <path d="M821 481 V590 M970 481 V590" stroke="#8a7c52" stroke-width=".6"/>
    <rect x="830" y="640" width="132" height="16" fill="#7c6f4a"/>
    <rect x="803" y="655" width="185" height="40" rx="5" fill="url(#flange)" stroke="#8a7c52" stroke-width=".6"/>
    <path d="M832 655 V695 M960 655 V695" stroke="#82754e" stroke-width=".7"/>
    <circle cx="1064" cy="434" r="23" fill="#00747a"/>
    <circle cx="727" cy="746" r="23" fill="#00747a"/>
    <g fill="none" stroke="#2bf0ec" stroke-width="3">
      <path d="M872 764 L721 764 Q709 764 709 752 L709 429 Q709 417 721 417 L1069 417 Q1083 417 1083 431 L1083 752 Q1083 764 1071 764 L1022 764 C1005 764 998 752 980 752 C962 752 950 764 921 764"/>
      <path d="M872 723 L762 723 Q750 723 750 711 L750 469 Q750 457 762 457 L1030 457 Q1042 457 1042 469 L1042 711 Q1042 723 1030 722 C1015 718 1000 713 983 713 C965 713 955 723 938 723"/>
      <path d="M864 682 L802 682 Q790 682 790 670 L790 509 Q790 497 802 497 L990 497 Q1002 497 1002 509 L1002 660 Q1002 672 990 672 C975 672 960 676 942 680"/>
      <path d="M832 560 L832 630 Q832 643 845 643 L860 643"/>
      <path d="M961 560 L961 622 Q961 634 935 638"/>
    </g>
    <path d="M775 537 Q795 533 802 508 Q812 518 823 520 L958 520 Q980 518 992 508 Q995 530 1018 537 Q1000 540 993 557 Q975 560 958 580 Q938 600 933 640 Q936 660 943 667 Q925 675 922 707 Q925 730 942 742 Q925 750 921 762 L921 820 Q921 823 918 823 L874 823 Q871 823 871 820 L871 695 Q870 675 850 667 Q858 655 857 643 Q858 610 835 580 Q815 565 795 558 Q795 545 775 537 Z" fill="#00ffff"/>
    <path d="M970 804 L988 793 L996 820 L1018 804" fill="none" stroke="#2bf0ec" stroke-width="2.4"/>
    <rect x="669" y="376" width="454" height="428" rx="1" fill="none" stroke="#2bf0ec" stroke-width="3.4"/>
    <path d="M653 535 H1139" stroke="#2bf0ec" stroke-width="3.6" stroke-linecap="round"/>`;
  }

  static get leftPaths() {
    return /* html */`
    <g fill="none" stroke-linecap="butt">
      <path d="M896 700 V820" stroke="#f5bb20" stroke-width="3"/>
      <path d="M880 600 V653 M913 603 V640" stroke="#f5bb20" stroke-width="3"/>
      <ellipse cx="896" cy="590" rx="21" ry="7" stroke="#f5bb20" stroke-width="3"/>
      <g stroke="#10e800" stroke-width="3.4">
        <path d="M890 770 Q905 775 917 790 T938 803"/>
        <path d="M883 727 Q902 730 913 743 T937 763"/>
        <path d="M900 730 Q910 745 930 760"/>
        <path d="M907 687 Q918 695 927 710 T940 722"/>
        <path d="M913 670 Q918 678 923 677 T942 682"/>
        <path d="M893 603 Q905 615 910 623 T937 638"/>
        <path d="M853 600 Q860 588 883 582"/>
        <path d="M863 617 Q868 605 874 597"/>
        <path d="M863 660 Q870 650 887 647"/>
        <path d="M873 687 L886 693" stroke-width="5"/>
        <path d="M918 583 Q930 590 945 596"/>
        <path d="M912 690 L925 722" stroke-width="2.6"/>
      </g>
      <g stroke="#1000e0" stroke-width="3.4" stroke-dasharray="7 5">
        <path d="M899 818 L895 763 L888 720 L883 703"/>
        <path d="M925 803 L912 737 L907 690 L903 673 L905 627 L890 577"/>
        <path d="M957 578 L923 577 L890 570 L880 557" stroke-width="4"/>
        <path d="M870 605 L860 638 M877 607 L867 638 M883 610 L874 640" stroke-width="2.6" stroke-dasharray="8 2"/>
        <path d="M890 670 L877 663 L883 610"/>
        <path d="M905 620 L905 650" stroke-width="6" stroke-dasharray="5 2"/>
        <path d="M802 535 L820 543"/>
      </g>
      <path d="M925 803 L900 693 L893 653 L890 573 L867 563 L802 533" stroke="#e01018" stroke-width="3" stroke-dasharray="6 8"/>
    </g>`;
  }

  static get rightPaths() {
    return /* html */`
    <path d="M1214 645 H1701" stroke="#2a70c8" stroke-width="1.2"/>
    <g fill="none">
      <path d="M1458 360 V483" stroke="#f5bb20" stroke-width="2.6"/>
      <path d="M1436 510 V560 M1480 510 V560" stroke="#f5bb20" stroke-width="2.6"/>
      <ellipse cx="1457" cy="590" rx="21" ry="10" stroke="#f5a020" stroke-width="3" transform="rotate(-6 1457 590)"/>
      <g stroke="#10e800" stroke-width="3.4">
        <path d="M1415 377 Q1428 390 1433 397 T1463 410"/>
        <path d="M1430 380 Q1440 395 1460 408"/>
        <path d="M1413 417 Q1425 428 1433 437 T1470 453"/>
        <path d="M1430 420 Q1445 440 1465 450"/>
        <path d="M1413 457 Q1428 468 1440 480 T1480 493"/>
        <path d="M1413 498 Q1428 508 1440 520 T1467 537"/>
        <path d="M1435 500 Q1450 515 1460 530"/>
        <path d="M1415 538 Q1430 552 1440 563 T1460 573"/>
        <path d="M1407 587 L1433 597" stroke-width="7"/>
        <path d="M1480 510 Q1484 515 1476 530 M1475 570 L1490 563" stroke-width="5"/>
        <path d="M1435 505 L1447 530" stroke-width="6"/>
        <path d="M1470 660 L1465 640" stroke-width="2.4"/>
      </g>
      <path d="M1403 658 L1423 647 L1413 657 Z M1508 647 L1523 652 L1513 660 Z" fill="#10e800" stroke="#10e800"/>
      <g stroke="#1000e0" stroke-width="3.4" stroke-dasharray="7 4">
        <path d="M1455 363 L1458 407 L1458 440"/>
        <path d="M1428 377 L1440 453 L1453 540 L1467 593"/>
        <path d="M1470 473 L1463 507 L1467 527" stroke-dasharray="12 3" stroke-width="4"/>
        <path d="M1492 542 L1475 573" stroke-width="4" stroke-dasharray="30 2"/>
        <path d="M1397 602 L1433 607 L1470 603" stroke-dasharray="10 2" stroke-width="5"/>
        <path d="M1363 647 L1370 640 L1417 637 L1500 635"/>
        <path d="M1467 607 L1493 657"/>
        <path d="M1552 640 V647"/>
      </g>
      <path d="M1428 377 L1453 493 L1473 537 L1550 640 M1363 643 L1440 610 L1467 597" stroke="#e01018" stroke-width="3" stroke-dasharray="6 8"/>
      <g stroke-width="1">
        <rect x="1443" y="542" width="30" height="22" stroke="#c07040"/>
        <path d="M1447 555 H1476 M1450 545 V570 M1465 540 V572" stroke="#8030c0" stroke-width="1.6"/>
        <rect x="1443" y="603" width="40" height="5" stroke="#b04040"/>
        <rect x="1449" y="617" width="13" height="14" rx="5" stroke="#c08050"/>
        <path d="M1462 613 L1468 628" stroke="#5070b0" stroke-width="3"/>
        <path d="M1440 616 L1450 630 M1476 612 L1470 625" stroke="#f5bb20" stroke-width="2"/>
        <circle cx="1470" cy="588" r="4" fill="#e01018"/>
      </g>
    </g>`;
  }

  static get triads() {
    return /* html */`
    <path d="M1072 545 L1460 590" stroke="#e01018" stroke-width="3" stroke-dasharray="8 9" fill="none"/>
    <g font-family='"Noto Sans", sans-serif' font-size="12">
      <path d="M1177 590 H1090" stroke="#b04048" stroke-width="1.6"/>
      <path d="M1073 590 L1092 586 V594 Z" fill="#d04040"/>
      <text x="1072" y="586" fill="#c45a5a">XM</text>
      <path d="M1177 590 V678" stroke="#3e8f3e" stroke-width="2"/>
      <path d="M1177 696 L1173 675 H1181 Z" fill="#3e8f3e"/>
      <text x="1182" y="705" fill="#7d9c84">YM</text>
      <circle cx="1177" cy="590" r="3.4" fill="#0c3cd8"/>
      <text x="1177" y="590" fill="#2a5fd0">ZM</text>
      <path d="M694 890 H660" stroke="#c43838" stroke-width="4"/>
      <path d="M643 890 L662 884 V896 Z" fill="#c43838"/>
      <text x="629" y="894" fill="#c45a5a">X</text>
      <path d="M715 911 V945" stroke="#3e963e" stroke-width="4"/>
      <path d="M715 961 L709 941 H721 Z" fill="#3e963e"/>
      <text x="711" y="976" fill="#7d9c84">Y</text>
      <rect x="694.5" y="868.5" width="41" height="42" fill="#fff" stroke="#b5b5b5"/>
      <circle cx="715" cy="889.5" r="5" fill="#0c3cd8"/>
    </g>`;
  }

  connectedCallback() {
    this.attachShadow({ mode: 'open' });
    this.shadowRoot.innerHTML = `
    <style>
      :host { display: flex; flex-direction: column; flex: 1; min-width: 0; position: relative; background: #fff; box-sizing: border-box; border-left: 2px solid #adadad; margin-left: -1px; }
      .tabs { height: 26px; border-bottom: 2px solid #145c78; box-sizing: border-box; flex: none; }
      .tab { width: 183px; height: 24px; background: #04608a; color: #fff; font-size: 12.5px; display: flex; align-items: center; box-sizing: border-box; padding-left: 8px; }
      .tab span { margin-left: 4px; }
      svg.view { display: block; flex: 1; width: 100%; min-height: 0; }
      ::slotted(nx-dialog) { position: absolute; left: 220px; top: 264px; }
    </style>
    <div class="tabs"><div class="tab">
      <svg width="15" height="16" viewBox="0 0 15 16" fill="none" stroke="#fff"><path d="M6 1H1V4H5V7H1M11 9 A3.5 3.5 0 0 0 6 11 M7 14 A3.5 3.5 0 0 0 13 12"/></svg>
      <span>1.百图-DJ15D_stp.prt</span>
      <svg width="12" height="12" viewBox="0 0 12 12" style="margin-left:4px"><path d="M2 1H8L10 3V11H2Z" fill="#fff"/><path d="M5 6 L11 4 M7 8 H10" stroke="#04608a"/></svg>
      <svg width="10" height="10" viewBox="0 0 10 10" style="margin-left:5px"><path d="M1 1 L9 9 M9 1 L1 9" stroke="#fff" stroke-width="2"/></svg>
    </div></div>
    <svg class="view" viewBox="609 205 1292 783" width="1292" height="783" preserveAspectRatio="xMinYMin meet">
      <g id="part">${NxViewport.part}</g>
      ${NxViewport.leftPaths}
      <use href="#part" transform="translate(561.5 1180) scale(1 -1)"></use>
      ${NxViewport.rightPaths}
      ${NxViewport.triads}
    </svg>
    <slot></slot>`;
  }
}

customElements.define('nx-icon', NxIcon);
customElements.define('nx-app', NxApp);
customElements.define('nx-titlebar', NxTitlebar);
customElements.define('nx-ribbon-item', NxRibbonItem);
customElements.define('nx-ribbon-group', NxRibbonGroup);
customElements.define('nx-ribbon', NxRibbon);
customElements.define('nx-select', NxSelect);
customElements.define('nx-toolbar', NxToolbar);
customElements.define('nx-rail', NxRail);
customElements.define('nx-navigator', NxNavigator);
customElements.define('nx-dialog', NxDialog);
customElements.define('nx-viewport', NxViewport);
</script>
</body>
</html>
